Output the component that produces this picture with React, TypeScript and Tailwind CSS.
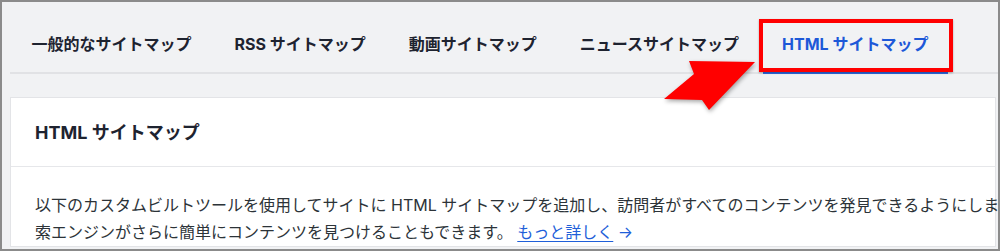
const tabs = ['一般的なサイトマップ', 'RSS サイトマップ', '動画サイトマップ', 'ニュースサイトマップ']

const Arrow = () => (
  <svg
    className="absolute left-[655px] top-[52px] h-[62px] w-[105px] drop-shadow-[1px_2px_2px_rgba(0,0,0,0.35)]"
    viewBox="0 0 105 62"
  >
    <polygon points="32,7 98,8 52,56 45,46 7,45 37,20" fill="#ff0000" />
  </svg>
)

export default function App() {
  return (
    <div className="relative box-border h-[251px] w-[1000px] overflow-hidden border-2 border-[#8b8b8b] bg-[#f1f2f4] font-['Inter','Noto_Sans_CJK_JP',sans-serif]">
      {/* Tabs */}
      <div className="ml-[8px] box-border flex h-[72px] items-end border-b-2 border-[#e1e2e5]">
        {tabs.map((t) => (
          <div
            key={t}
            className="flex h-[52px] items-center px-[21.5px] pb-[4px] text-[16px] font-bold text-[#1e2330]"
          >
            {t}
          </div>
        ))}
        <div className="relative flex h-[52px] items-center px-[21.5px] pb-[4px] text-[16px] font-bold text-[#1d58d8]">
          HTML サイトマップ
          <span className="absolute -bottom-[2px] left-[2px] right-[2px] h-[2px] bg-[#2f6be0]" />
          <span className="absolute -left-[2px] -right-[3px] -top-[1px] bottom-0 border-4 border-[#ff0000] shadow-[0_1px_2px_rgba(0,0,0,0.3)]" />
        </div>
      </div>

      {/* Card */}
      <div className="ml-[8px] mr-[2px] mt-[23px] border border-[#e3e4e7] bg-white">
        <div className="flex h-[69px] items-center border-b border-[#e6e7ea] pl-6 text-[18px] font-bold text-[#1e2330]">
          HTML サイトマップ
        </div>
        <div className="whitespace-nowrap pl-6 pt-[25px] text-[16px] leading-[27px] text-[#2c3338]">
          <p>
            以下のカスタムビルトツールを使用してサイトに HTML
            サイトマップを追加し、訪問者がすべてのコンテンツを発見できるようにします。また、検
          </p>
          <p>
            索エンジンがさらに簡単にコンテンツを見つけることもできます。{' '}
            <a href="#" className="text-[#1f5fd9] underline underline-offset-[3px]">
              もっと詳しく
            </a>{' '}
            <span className="text-[#1f5fd9]">→</span>
          </p>
        </div>
      </div>

      <Arrow />
    </div>
  )
}
